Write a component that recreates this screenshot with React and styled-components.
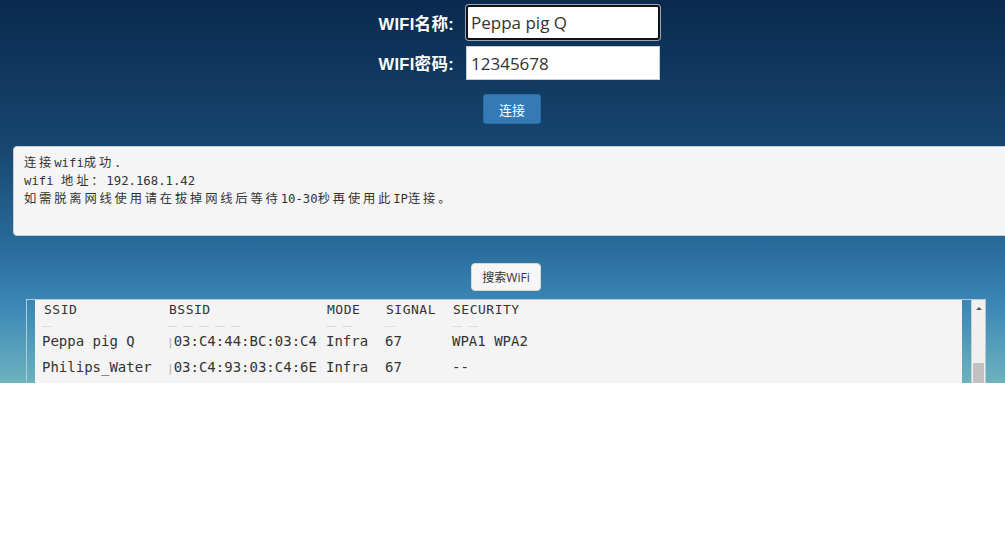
import React from "react";
import styled, { createGlobalStyle } from "styled-components";

const GlobalStyle = createGlobalStyle`
  html, body {
    margin: 0;
    padding: 0;
    background: #ffffff;
  }
`;

const networks = [
  { ssid: "Peppa pig Q", bssid: "03:C4:44:BC:03:C4", mode: "Infra", signal: "67", security: "WPA1 WPA2" },
  { ssid: "Philips_Water", bssid: "03:C4:93:03:C4:6E", mode: "Infra", signal: "67", security: "--" },
];

// faint remains of the row scrolled under the header
const peekDashes = [
  [0],
  [0, 28, 56, 84, 112],
  [0, 14],
  [0],
  [0, 40],
];

const App = () => {
  return (
    <Page>
      <GlobalStyle />
      <Form>
        <FieldRow>
          <Label>WIFI名称:</Label>
          <Field $focused readOnly value="Peppa pig Q" />
        </FieldRow>
        <FieldRow>
          <Label>WIFI密码:</Label>
          <Field readOnly value="12345678" />
        </FieldRow>
        <ButtonRow $shift={19} $top={8}>
          <PrimaryButton>连接</PrimaryButton>
        </ButtonRow>
      </Form>

      <Message>
        <Line>
          <Cn>连接</Cn>wifi<Cn>成功</Cn>.
        </Line>
        <Line>
          wifi <Cn>地址：</Cn>192.168.1.42
        </Line>
        <Line>
          <Cn>如需脱离网线使用请在拔掉网线后等待</Cn>10-30<Cn>秒再使用此</Cn>IP<Cn>连接。</Cn>
        </Line>
      </Message>

      <ButtonRow $shift={7} $top={27}>
        <DefaultButton>搜索WiFi</DefaultButton>
      </ButtonRow>

      <ListFrame>
        <ListBody>
          <HeadRow>
            <span>SSID</span>
            <span>BSSID</span>
            <span>MODE</span>
            <span>SIGNAL</span>
            <span>SECURITY</span>
          </HeadRow>
          <Peek>
            {peekDashes.map((cell, i) => (
              <PeekCell key={i}>
                {cell.map((x) => (
                  <Dash key={x} />
                ))}
              </PeekCell>
            ))}
          </Peek>
          {networks.map((n) => (
            <DataRow key={n.ssid}>
              <span>{n.ssid}</span>
              <span>
                <Tick>|</Tick>
                {n.bssid}
              </span>
              <span>{n.mode}</span>
              <span>{n.signal}</span>
              <span>{n.security}</span>
            </DataRow>
          ))}
        </ListBody>
        <Scrollbar>
          <ArrowUp />
          <Thumb />
        </Scrollbar>
      </ListFrame>
    </Page>
  );
};

const Page = styled.div`
  height: 383px;
  overflow: hidden;
  background: linear-gradient(
    to bottom,
    #0a294f 0%,
    #17466f 38%,
    #2a6d9c 65%,
    #3b88b6 80%,
    #6cb3bd 100%
  );
  font-family: "Open Sans", "Noto Sans CJK SC", sans-serif;
`;

const Form = styled.div`
  padding-top: 5px;
  display: flex;
  flex-direction: column;
  gap: 6px;
`;

const FieldRow = styled.div`
  display: grid;
  grid-template-columns: 454px 194px;
  column-gap: 12px;
  align-items: center;
`;

const Label = styled.label`
  text-align: right;
  color: #ffffff;
  font-weight: 700;
  font-size: 16.5px;
  letter-spacing: 0.3px;
  font-family: "Liberation Sans", "Noto Sans CJK SC", sans-serif;
`;

const Field = styled.input`
  box-sizing: border-box;
  width: 194px;
  height: ${(p) => (p.$focused ? "35px" : "34px")};
  padding: 0 ${(p) => (p.$focused ? "3px" : "4px")};
  border: ${(p) => (p.$focused ? "2px solid #111111" : "1px solid #cccccc")};
  border-radius: ${(p) => (p.$focused ? "3px" : "0")};
  box-shadow: ${(p) => (p.$focused ? "0 0 0 1px #9aa8b8" : "none")};
  background: #ffffff;
  color: #333333;
  font-family: "Open Sans", sans-serif;
  font-size: 17px;
  outline: none;
`;

const ButtonRow = styled.div`
  display: flex;
  justify-content: center;
  padding-left: ${(p) => p.$shift}px;
  margin-top: ${(p) => p.$top}px;
`;

const PrimaryButton = styled.button`
  width: 58px;
  height: 30px;
  background: #337ab7;
  border: 1px solid #2e6da4;
  border-radius: 3px;
  color: #ffffff;
  font-family: "Noto Sans CJK SC", sans-serif;
  font-size: 13px;
  padding: 0;
`;

const DefaultButton = styled.button`
  width: 70px;
  height: 28px;
  background: #f6f6f6;
  border: 1px solid #d8d8d8;
  border-radius: 4px;
  color: #333333;
  font-family: "Open Sans", "Noto Sans CJK SC", sans-serif;
  font-size: 12px;
  padding: 0;
`;

const Message = styled.div`
  box-sizing: border-box;
  margin: 22px -12px 0 13px;
  height: 90px;
  padding: 7px 10px 6px;
  background: #f5f5f5;
  border: 1px solid #cccccc;
  border-radius: 4px;
  color: #333333;
  font-family: "DejaVu Sans Mono", "Liberation Mono", monospace;
  font-size: 12.3px;
`;

const Line = styled.div`
  line-height: 17px;
  white-space: pre;
`;

const Cn = styled.span`
  font-family: "Noto Sans CJK SC", sans-serif;
  font-size: 12.3px;
  letter-spacing: 2.8px;
`;

const ListFrame = styled.div`
  display: flex;
  margin: 8px 19px 0 26px;
  height: 110px;
  border: 1px solid #b8cad6;
  border-bottom: none;
  padding-left: 8px;
`;

const ListBody = styled.div`
  flex: 1;
  background: #f4f4f4;
  margin-right: 9px;
  overflow: hidden;
`;

const HeadRow = styled.div`
  display: grid;
  grid-template-columns: 125px 158px 59px 67px 1fr;
  padding: 1px 0 0 9px;
  height: 18px;
  color: #333333;
  font-family: "DejaVu Sans Mono", monospace;
  font-size: 13px;
  letter-spacing: 0.5px;
  line-height: 18px;
`;

const Peek = styled.div`
  display: grid;
  grid-template-columns: 125px 159px 59px 67px 1fr;
  align-items: end;
  padding-left: 7px;
  height: 9px;
`;

const PeekCell = styled.div`
  display: flex;
  gap: 6px;
  padding-bottom: 1px;
`;

const Dash = styled.span`
  width: 10px;
  height: 1px;
  background: #dcdcdc;
`;

const DataRow = styled.div`
  display: grid;
  grid-template-columns: 125px 159px 59px 67px 1fr;
  padding-left: 7px;
  height: 26px;
  line-height: 26px;
  color: #333333;
  font-family: "DejaVu Sans Mono", monospace;
  font-size: 14px;
  white-space: pre;
`;

const Tick = styled.span`
  color: #aaaaaa;
  font-size: 11px;
`;

const Scrollbar = styled.div`
  position: relative;
  width: 13px;
  background: #f0f0f0;
  border-left: 1px solid #c8d0d6;
`;

const ArrowUp = styled.div`
  width: 0;
  height: 0;
  margin: 7px auto 0;
  border-left: 3px solid transparent;
  border-right: 3px solid transparent;
  border-bottom: 3px solid #555555;
`;

const Thumb = styled.div`
  margin: 53px auto 0;
  width: 11px;
  height: 40px;
  background: #c1c1c1;
`;

export default App;
